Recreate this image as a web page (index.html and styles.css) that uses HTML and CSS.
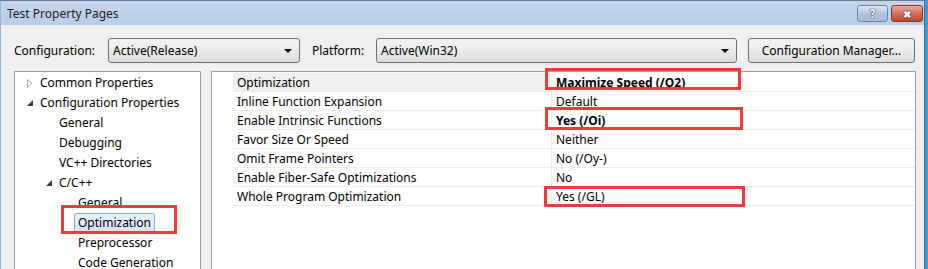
FILE: index.html
```html
<!DOCTYPE html>
<html lang="en">

<head>
  <meta charset="UTF-8">
  <title>Test Property Pages</title>
  <link rel="stylesheet" href="styles.css">
</head>

<body>

  <div class="window">
    <div class="titlebar">
      <span class="title">Test Property Pages</span>
      <div class="caption-btns">
        <span class="cbtn help">?</span>
        <span class="cbtn close">&#x2716;</span>
      </div>
    </div>

    <div class="content">
      <div class="toolbar">
        <span class="lbl lbl-config">Configuration:</span>
        <div class="combo combo-config"><span>Active(Release)</span><i class="caret"></i></div>
        <span class="lbl lbl-platform">Platform:</span>
        <div class="combo combo-platform"><span>Active(Win32)</span><i class="caret"></i></div>
        <button class="btn">Configuration Manager...</button>
      </div>

      <div class="panes">
        <div class="tree">
          <div class="node lvl0"><span class="twist"><svg width="6" height="9" viewBox="0 0 6 9"><path d="M0.5 0.5 L5 4.5 L0.5 8.5 Z" fill="none" stroke="#a6a6a6"/></svg></span><span class="label">Common Properties</span></div>
          <div class="node lvl0"><span class="twist"><svg width="7" height="7" viewBox="0 0 7 7"><path d="M6 0 L6 6 L0 6 Z" fill="#3c3c3c"/></svg></span><span class="label">Configuration Properties</span></div>
          <div class="node lvl1"><span class="twist"></span><span class="label">General</span></div>
          <div class="node lvl1"><span class="twist"></span><span class="label">Debugging</span></div>
          <div class="node lvl1"><span class="twist"></span><span class="label">VC++ Directories</span></div>
          <div class="node lvl1"><span class="twist"><svg width="7" height="7" viewBox="0 0 7 7"><path d="M6 0 L6 6 L0 6 Z" fill="#3c3c3c"/></svg></span><span class="label">C/C++</span></div>
          <div class="node lvl2"><span class="twist"></span><span class="label">General</span></div>
          <div class="node lvl2"><span class="twist"></span><span class="label selected">Optimization<span class="mark mark-tree"></span></span></div>
          <div class="node lvl2"><span class="twist"></span><span class="label">Preprocessor</span></div>
          <div class="node lvl2"><span class="twist"></span><span class="label">Code Generation</span></div>
        </div>

        <div class="grid">
          <div class="row">
            <div class="gutter"></div>
            <div class="name current">Optimization</div>
            <div class="value bold">Maximize Speed (/O2)<span class="mark mark-1"></span></div>
          </div>
          <div class="row">
            <div class="gutter"></div>
            <div class="name">Inline Function Expansion</div>
            <div class="value">Default</div>
          </div>
          <div class="row">
            <div class="gutter"></div>
            <div class="name">Enable Intrinsic Functions</div>
            <div class="value bold">Yes (/Oi)<span class="mark mark-2"></span></div>
          </div>
          <div class="row">
            <div class="gutter"></div>
            <div class="name">Favor Size Or Speed</div>
            <div class="value">Neither</div>
          </div>
          <div class="row">
            <div class="gutter"></div>
            <div class="name">Omit Frame Pointers</div>
            <div class="value">No (/Oy-)</div>
          </div>
          <div class="row">
            <div class="gutter"></div>
            <div class="name">Enable Fiber-Safe Optimizations</div>
            <div class="value">No</div>
          </div>
          <div class="row">
            <div class="gutter"></div>
            <div class="name">Whole Program Optimization</div>
            <div class="value">Yes (/GL)<span class="mark mark-3"></span></div>
          </div>
        </div>
      </div>
    </div>
  </div>

</body>

</html>
```

FILE: styles.css
```css
body {
  margin: 0;
  padding: 0;
  background: #2aa3e2;
  font-family: 'Noto Sans', sans-serif;
  font-size: 12px;
  color: #000;
  overflow: hidden;
}

.window {
  width: 923px;
  height: 268px;
  border-top: 1px solid #6f7c8b;
  border-left: 1px solid #98b3d4;
  border-right: 1px solid #58636f;
  background: #f0f0f0;
  overflow: hidden;
}

/* title bar */
.titlebar {
  height: 24px;
  display: flex;
  align-items: center;
  justify-content: space-between;
  background: linear-gradient(#c4d6ee, #b8cde8);
  padding-left: 6px;
}

.title {
  color: #1e1e1e;
}

.caption-btns {
  display: flex;
  gap: 3px;
  align-self: flex-start;
  margin-top: 4px;
  margin-right: 1px;
}

.cbtn {
  display: flex;
  align-items: center;
  justify-content: center;
  height: 15px;
  border-radius: 3px;
  color: #fff;
  font-weight: bold;
  font-size: 12px;
  text-shadow: 0 0 1px #333, 0 0 1px #333, 0 0 1px #333;
}

.help {
  width: 29px;
  border: 1px solid #7186a3;
  background: linear-gradient(#dfe8f4, #b3c6df 50%, #a7bcd8);
}

.close {
  width: 30px;
  border: 1px solid #803a2e;
  background: linear-gradient(#ebaea2, #d57462 45%, #c3472f);
  font-size: 10px;
}

/* dialog content */
.content {
  padding: 13px 0 0 13px;
}

.toolbar {
  display: flex;
  align-items: center;
  height: 25px;
}

.lbl-config {
  width: 94px;
}

.lbl-platform {
  width: 64px;
  margin-left: 12px;
}

.combo {
  height: 25px;
  display: flex;
  align-items: center;
  justify-content: space-between;
  padding: 0 7px 0 4px;
  border: 1px solid #707070;
  border-radius: 3px;
  background: linear-gradient(#f3f3f3, #ebebeb 50%, #dcdcdc);
  box-sizing: border-box;
}

.combo-config {
  width: 192px;
}

.combo-platform {
  width: 361px;
}

.caret {
  width: 0;
  height: 0;
  border-left: 4px solid transparent;
  border-right: 4px solid transparent;
  border-top: 4px solid #000;
}

.btn {
  margin-left: 11px;
  width: 167px;
  height: 25px;
  border: 1px solid #707070;
  border-radius: 3px;
  background: linear-gradient(#f3f3f3, #ebebeb 50%, #dcdcdc);
  font-family: inherit;
  font-size: 12px;
  color: #000;
  padding: 0;
}

.panes {
  display: flex;
  gap: 10px;
  margin-top: 8px;
}

/* tree */
.tree {
  width: 185px;
  height: 220px;
  padding-top: 1px;
  background: #fff;
  border: 1px solid #a0a0a0;
}

.node {
  height: 20px;
  display: flex;
  align-items: center;
  white-space: nowrap;
}

.lvl0 { padding-left: 12px; }
.lvl1 { padding-left: 31px; }
.lvl2 { padding-left: 50px; }

.twist {
  width: 13px;
  display: inline-flex;
  align-items: center;
}

.label {
  position: relative;
  padding: 0 3px;
  margin-left: -4px;
  border: 1px solid transparent;
  line-height: 18px;
}

.label.selected {
  border-color: #84acdd;
  border-radius: 2px;
  background: linear-gradient(#eaf2fc, #d2e4f8);
}

/* property grid */
.grid {
  width: 703px;
  height: 220px;
  padding-top: 1px;
  background: #fff;
  border: 1px solid #a0a0a0;
}

.row {
  display: flex;
  height: 19px;
}

.gutter {
  width: 21px;
}

.name,
.value {
  position: relative;
  height: 17px;
  padding-top: 1px;
  line-height: 17px;
  padding-left: 4px;
  border-bottom: 1px solid #ededed;
  white-space: nowrap;
}

.name {
  width: 314px;
  border-right: 1px solid #ededed;
}

.name.current {
  background: #f0f0f0;
}

.value {
  flex: 1;
}

.bold {
  font-weight: bold;
}

/* red annotation boxes */
.mark {
  position: absolute;
  border: 3px solid #ee3b3b;
  box-sizing: border-box;
}

.mark-tree {
  left: -14px;
  top: -9px;
  width: 116px;
  height: 29px;
}

.mark-1 {
  left: -7px;
  top: -5px;
  width: 196px;
  height: 22px;
}

.mark-2 {
  left: -7px;
  top: -4px;
  width: 198px;
  height: 23px;
}

.mark-3 {
  left: -8px;
  top: -1px;
  width: 201px;
  height: 21px;
}
```
